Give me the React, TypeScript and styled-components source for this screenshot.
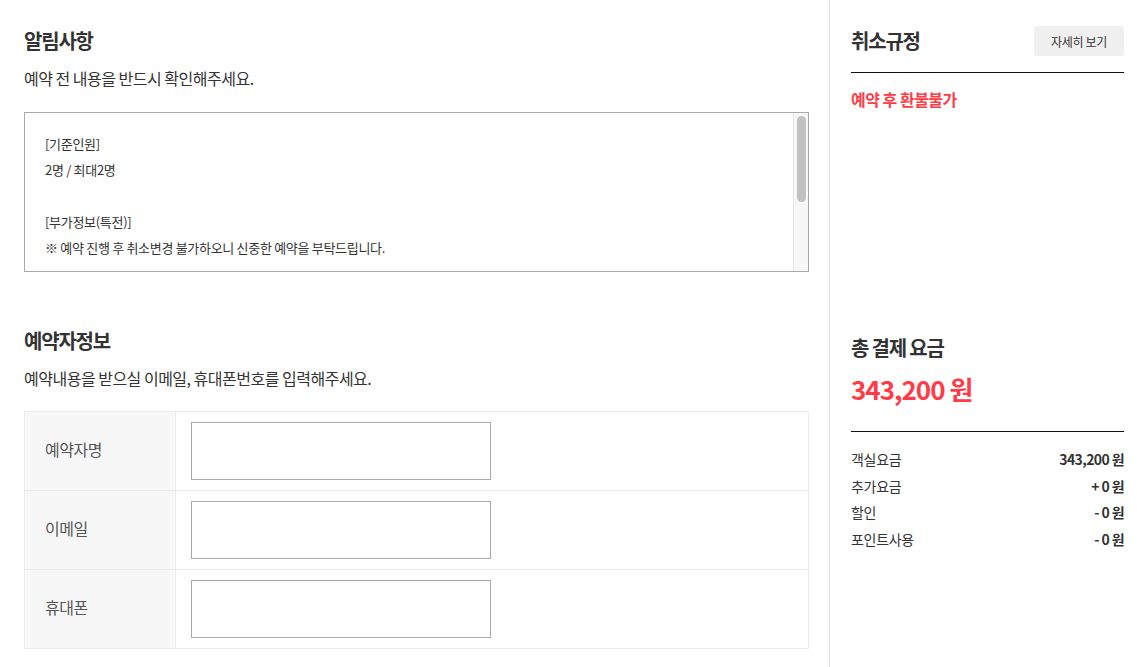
import React from 'react';
import styled, { createGlobalStyle } from 'styled-components';

const GlobalStyle = createGlobalStyle`
    html, body {
        margin: 0;
        padding: 0;
        background: #fff;
    }
    body {
        font-family: 'Noto Sans CJK KR', 'Noto Sans', sans-serif;
        color: #333;
    }
`;

const noticeLines = [
    '[기준인원]',
    '2명 / 최대2명',
    '',
    '[부가정보(특전)]',
    '※ 예약 진행 후 취소변경 불가하오니 신중한 예약을 부탁드립니다.',
];

const formFields = [
    { label: '예약자명', type: 'text' },
    { label: '이메일', type: 'email' },
    { label: '휴대폰', type: 'tel' },
];

const priceRows = [
    { label: '객실요금', value: '343,200 원' },
    { label: '추가요금', value: '+ 0 원' },
    { label: '할인', value: '- 0 원' },
    { label: '포인트사용', value: '- 0 원' },
];

export default function App() {
    return (
        <>
            <GlobalStyle />
            <Page>
                <Main>
                    <Section>
                        <SectionTitle>알림사항</SectionTitle>
                        <SectionDesc>예약 전 내용을 반드시 확인해주세요.</SectionDesc>
                        <NoticeBox>
                            <NoticeContent>
                                {noticeLines.map((line, i) => (
                                    <NoticeLine key={i}>{line || '\u00a0'}</NoticeLine>
                                ))}
                            </NoticeContent>
                            <ScrollTrack>
                                <ScrollThumb />
                            </ScrollTrack>
                        </NoticeBox>
                    </Section>
                    <Section>
                        <SectionTitle>예약자정보</SectionTitle>
                        <SectionDesc>예약내용을 받으실 이메일, 휴대폰번호를 입력해주세요.</SectionDesc>
                        <FormTable>
                            {formFields.map((field) => (
                                <FormRow key={field.label}>
                                    <FormLabel>{field.label}</FormLabel>
                                    <FormCell>
                                        <TextInput type={field.type} />
                                    </FormCell>
                                </FormRow>
                            ))}
                        </FormTable>
                    </Section>
                </Main>
                <Aside>
                    <AsideHeader>
                        <AsideTitle>취소규정</AsideTitle>
                        <DetailButton type="button">자세히 보기</DetailButton>
                    </AsideHeader>
                    <RefundText>예약 후 환불불가</RefundText>

                    <TotalBlock>
                        <AsideTitle>총 결제 요금</AsideTitle>
                        <TotalPrice>343,200 원</TotalPrice>
                    </TotalBlock>
                    <PriceList>
                        {priceRows.map((row) => (
                            <PriceRow key={row.label}>
                                <span>{row.label}</span>
                                <PriceValue>{row.value}</PriceValue>
                            </PriceRow>
                        ))}
                    </PriceList>
                </Aside>
            </Page>
        </>
    );
}

const Page = styled.div`
    display: grid;
    grid-template-columns: 830px 1fr;
    min-height: 100vh;
`;

const Main = styled.div`
    border-right: 1px solid #e4e4e4;
    padding: 24px 20px 0 24px;
`;

const Section = styled.section`
    & + & {
        margin-top: 52px;
    }
`;

const SectionTitle = styled.h2`
    margin: 0;
    font-size: 20px;
    line-height: 34px;
    font-weight: 700;
    color: #333;
    letter-spacing: -1.2px;
`;

const SectionDesc = styled.p`
    margin: 8px 0 0;
    font-size: 16px;
    line-height: 24px;
    color: #333;
    letter-spacing: -0.5px;
`;

const NoticeBox = styled.div`
    display: flex;
    margin-top: 22px;
    height: 160px;
    border: 1px solid #a9a9a9;
    box-sizing: border-box;
`;

const NoticeContent = styled.div`
    flex: 1;
    padding: 18px 20px 0;
    overflow: hidden;
`;

const NoticeLine = styled.div`
    font-size: 13px;
    line-height: 26px;
    color: #333;
    letter-spacing: -0.3px;
`;

const ScrollTrack = styled.div`
    width: 15px;
    padding: 3px 2px 0 3px;
    box-sizing: border-box;
    background: #f7f7f7;
    border-left: 1px solid #e6e6e6;
`;

const ScrollThumb = styled.div`
    height: 86px;
    border-radius: 5px;
    background: #c1c1c1;
`;

const FormTable = styled.div`
    margin-top: 21px;
    border: 1px solid #ebebeb;
`;

const FormRow = styled.div`
    display: grid;
    grid-template-columns: 151px 1fr;
    height: 78px;

    & + & {
        border-top: 1px solid #ebebeb;
    }
`;

const FormLabel = styled.div`
    display: flex;
    align-items: center;
    padding: 0 0 5px 20px;
    background: #f7f7f7;
    border-right: 1px solid #ebebeb;
    font-size: 16px;
    color: #555;
    letter-spacing: -0.5px;
`;

const FormCell = styled.div`
    display: flex;
    align-items: center;
    padding-left: 15px;
`;

const TextInput = styled.input`
    width: 300px;
    height: 58px;
    box-sizing: border-box;
    border: 1px solid #a9a9a9;
    border-radius: 0;
    outline: none;
    padding: 0 12px;
    font-size: 15px;
`;

const Aside = styled.aside`
    padding: 24px 13px 0 21px;
`;

const AsideHeader = styled.div`
    display: flex;
    align-items: center;
    justify-content: space-between;
    padding-bottom: 14px;
    border-bottom: 1px solid #111;
`;

const AsideTitle = styled.h3`
    margin: 0;
    font-size: 20px;
    line-height: 34px;
    font-weight: 700;
    color: #333;
    letter-spacing: -1.2px;
`;

const DetailButton = styled.button`
    width: 90px;
    height: 30px;
    border: 0;
    border-radius: 3px;
    background: #f0f0f0;
    font-family: inherit;
    font-size: 12px;
    color: #333;
    letter-spacing: -0.3px;
    cursor: pointer;
`;

const RefundText = styled.div`
    margin-top: 14px;
    font-size: 16px;
    line-height: 24px;
    font-weight: 700;
    color: #ff3b47;
    letter-spacing: -0.5px;
`;

const TotalBlock = styled.div`
    margin-top: 220px;
    padding-bottom: 24px;
    border-bottom: 1px solid #111;
`;

const TotalPrice = styled.div`
    margin-top: 6px;
    font-size: 26px;
    line-height: 36px;
    font-weight: 700;
    color: #ff3b47;
    letter-spacing: -1px;
`;

const PriceList = styled.div`
    margin-top: 14px;
`;

const PriceRow = styled.div`
    display: flex;
    justify-content: space-between;
    font-size: 14px;
    line-height: 26.7px;
    color: #333;
    letter-spacing: -0.3px;
`;

const PriceValue = styled.span`
    font-weight: 700;
    letter-spacing: -0.6px;
`;
